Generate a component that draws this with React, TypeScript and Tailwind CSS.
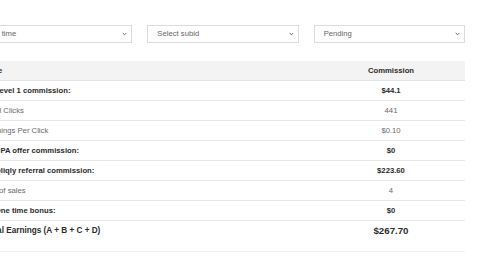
import React from "react";

const Chevron = () => (
  <svg width="5" height="4" viewBox="0 0 5 4" className="shrink-0">
    <path d="M0.7 1 L2.5 2.8 L4.3 1" fill="none" stroke="#666" strokeWidth="1" />
  </svg>
);

const Select = ({ label }: { label: string }) => (
  <div className="h-[18px] border border-[#dcdcdc] bg-white flex items-center justify-between pl-[9px] pr-[4px] text-[7.7px] text-[#666]">
    <span>{label}</span>
    <Chevron />
  </div>
);

type Row = { label: string; value: string; bold: boolean };

const rows: Row[] = [
  { label: "A. Level 1 commission:", value: "$44.1", bold: true },
  { label: "Total Clicks", value: "441", bold: false },
  { label: "Earnings Per Click", value: "$0.10", bold: false },
  { label: "B. CPA offer commission:", value: "$0", bold: true },
  { label: "C. Qliqly referral commission:", value: "$223.60", bold: true },
  { label: "No. of sales", value: "4", bold: false },
  { label: "D. One time bonus:", value: "$0", bold: true },
];

export default function App() {
  return (
    <div
      className="w-[480px] h-[270px] overflow-hidden bg-white"
      style={{ fontFamily: '"Liberation Sans", Arial, sans-serif' }}
    >
      <div className="ml-[-19px] w-[484px] pt-[25px]">
        <div className="grid grid-cols-3 gap-[15px]">
          <Select label="All time" />
          <Select label="Select subid" />
          <Select label="Pending" />
        </div>
        <div className="mt-[18px] text-[7.7px]">
          <div className="flex h-[20px] bg-[#f3f3f3] border-b border-[#e3e3e3] items-center font-bold text-[#2b2b2b]">
            <div className="flex-1 pl-[4px]">Type</div>
            <div className="w-[148px] text-center">Commission</div>
          </div>
          {rows.map((r) => (
            <div
              key={r.label}
              className={
                "flex h-[20px] border-b border-[#e6e6e6] items-center " +
                (r.bold ? "font-bold text-[#2b2b2b]" : "text-[#6a6a6a]")
              }
            >
              <div className="flex-1 pl-[4px]">{r.label}</div>
              <div className="w-[148px] text-center">{r.value}</div>
            </div>
          ))}
          <div className="flex h-[31px] border-b border-[#efefef] items-start font-bold text-[#2b2b2b]">
            <div className="flex-1 pl-[4px] h-[20px] flex items-center text-[8.2px]">
              Total Earnings (A + B + C + D)
            </div>
            <div className="w-[148px] h-[20px] flex items-center justify-center text-[9.7px]">
              $267.70
            </div>
          </div>
        </div>
      </div>
    </div>
  );
}
